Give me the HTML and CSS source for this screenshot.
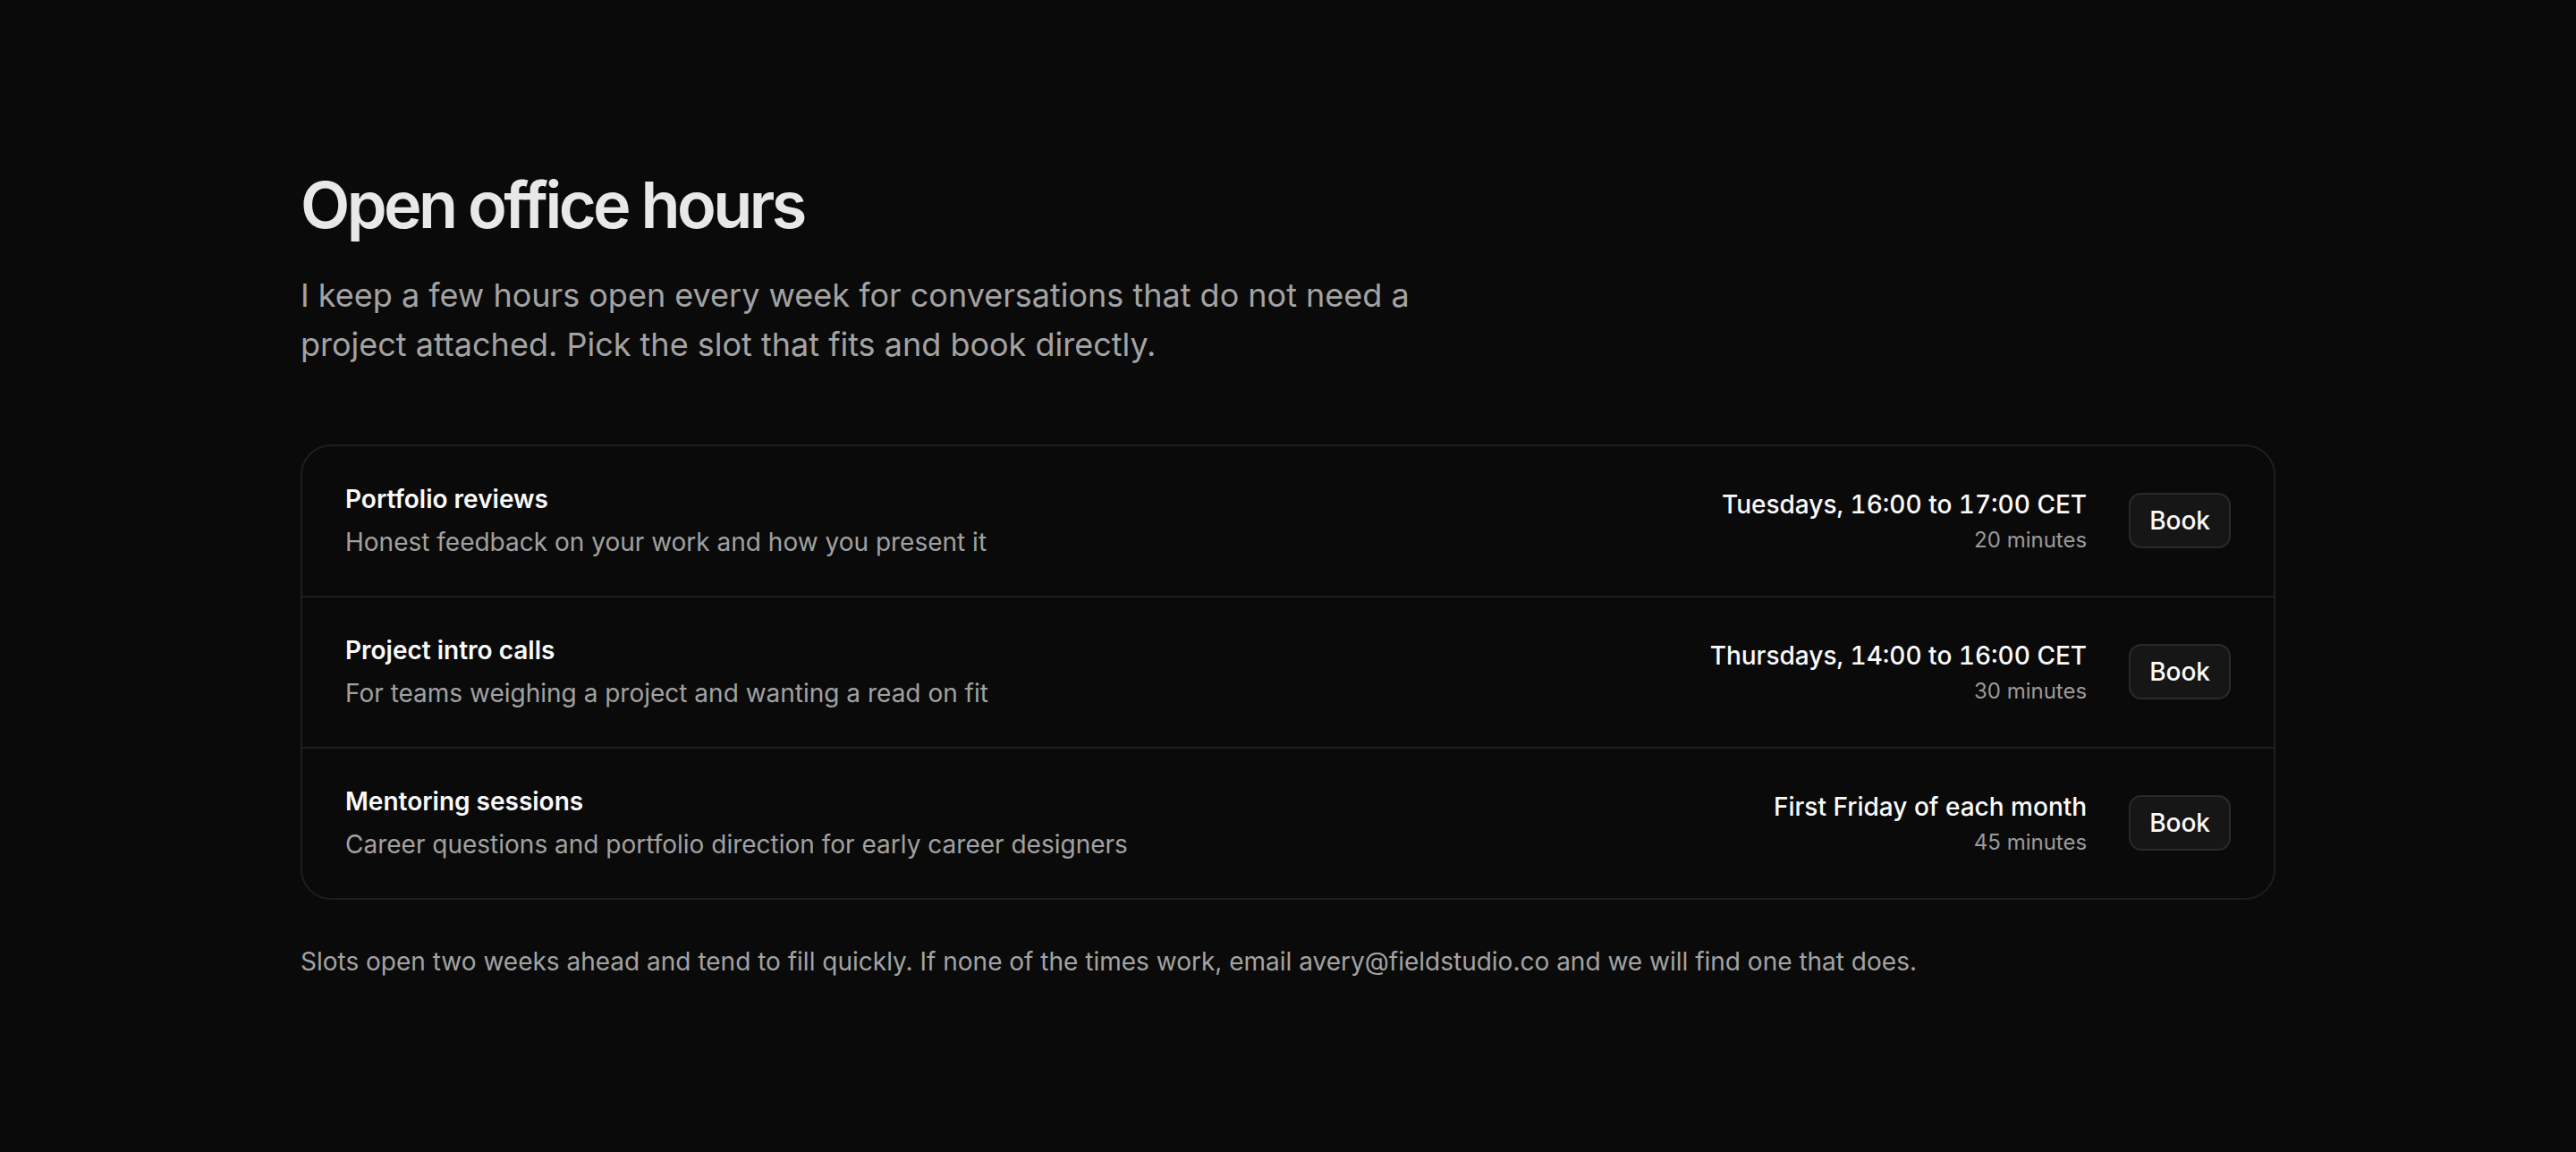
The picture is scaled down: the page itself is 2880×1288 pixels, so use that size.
FILE: index.html
```html
<!DOCTYPE html>
<html lang="en">
<head>
    <meta charset="UTF-8">
    <meta name="viewport" content="width=device-width, initial-scale=1.0">
    <title>Open office hours</title>
    <link rel="stylesheet" href="styles.css">
</head>
<body>
    <main class="page">
        <h1 class="title">Open office hours</h1>
        <p class="intro">
            I keep a few hours open every week for conversations that do not need a
            project attached. Pick the slot that fits and book directly.
        </p>

        <div class="slots">
            <div class="slot">
                <div class="slot-info">
                    <h2 class="slot-name">Portfolio reviews</h2>
                    <p class="slot-desc">Honest feedback on your work and how you present it</p>
                </div>
                <div class="slot-side">
                    <div class="slot-when">
                        <p class="slot-time">Tuesdays, 16:00 to 17:00 CET</p>
                        <p class="slot-length">20 minutes</p>
                    </div>
                    <button class="book-btn">Book</button>
                </div>
            </div>

            <div class="slot">
                <div class="slot-info">
                    <h2 class="slot-name">Project intro calls</h2>
                    <p class="slot-desc">For teams weighing a project and wanting a read on fit</p>
                </div>
                <div class="slot-side">
                    <div class="slot-when">
                        <p class="slot-time">Thursdays, 14:00 to 16:00 CET</p>
                        <p class="slot-length">30 minutes</p>
                    </div>
                    <button class="book-btn">Book</button>
                </div>
            </div>

            <div class="slot">
                <div class="slot-info">
                    <h2 class="slot-name">Mentoring sessions</h2>
                    <p class="slot-desc">Career questions and portfolio direction for early career designers</p>
                </div>
                <div class="slot-side">
                    <div class="slot-when">
                        <p class="slot-time">First Friday of each month</p>
                        <p class="slot-length">45 minutes</p>
                    </div>
                    <button class="book-btn">Book</button>
                </div>
            </div>
        </div>

        <p class="note">
            Slots open two weeks ahead and tend to fill quickly. If none of the times work, email avery@fieldstudio.co and we will find one that does.
        </p>
    </main>
</body>
</html>
```

FILE: styles.css
```css
* {
    margin: 0;
    padding: 0;
    box-sizing: border-box;
}

body {
    font-family: Inter, "Noto Sans", sans-serif;
    background-color: #0a0a0a;
    color: #fafafa;
    min-height: 100vh;
}

.page {
    max-width: 2208px;
    margin: 0 auto;
    padding: 189px 0 120px;
}

.title {
    font-size: 72px;
    line-height: 79px;
    font-weight: 600;
    letter-spacing: -0.05em;
    color: #e8e8e8;
}

.intro {
    max-width: 1280px;
    margin-top: 35px;
    font-size: 36px;
    line-height: 55px;
    color: #a3a3a3;
}

.slots {
    margin-top: 84px;
    border: 2px solid #1f1f1f;
    border-radius: 34px;
}

.slot {
    display: flex;
    justify-content: space-between;
    align-items: center;
    padding: 38px 48px 39px;
    border-bottom: 2px solid #1f1f1f;
}

.slot:last-child {
    border-bottom: none;
}

.slot-name {
    font-size: 28px;
    line-height: 42px;
    font-weight: 600;
    color: #fafafa;
}

.slot-desc {
    margin-top: 6px;
    font-size: 28px;
    line-height: 42px;
    color: #a1a1a1;
}

.slot-side {
    display: flex;
    align-items: center;
    gap: 47px;
}

.slot-when {
    text-align: right;
}

.slot-time {
    font-size: 28px;
    line-height: 42px;
    font-weight: 500;
    font-variant-numeric: tabular-nums;
    color: #fafafa;
}

.slot-length {
    margin-top: 1px;
    font-size: 24px;
    line-height: 36px;
    color: #9a9a9a;
}

.book-btn {
    font-family: inherit;
    font-size: 28px;
    line-height: 40px;
    font-weight: 500;
    padding: 9px 21px;
    color: #fafafa;
    background-color: #161616;
    border: 2px solid #2a2a2a;
    border-radius: 14px;
    cursor: pointer;
}

.book-btn:hover {
    background-color: #1f1f1f;
}

.note {
    margin-top: 48px;
    font-size: 28px;
    line-height: 42px;
    color: #a3a3a3;
}
```
